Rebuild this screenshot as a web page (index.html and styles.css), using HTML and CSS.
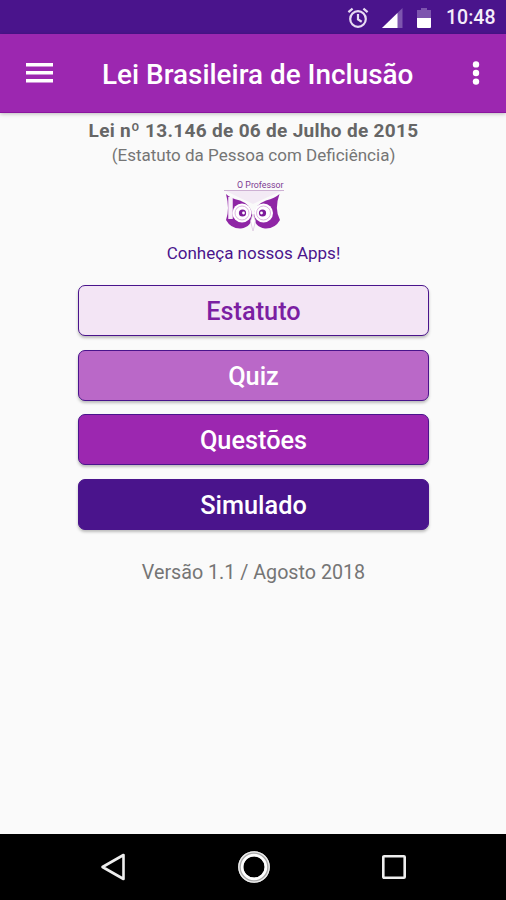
FILE: index.html
```html
<!DOCTYPE html>
<html lang="pt-BR">
<head>
<meta charset="utf-8">
<title>Lei Brasileira de Inclusão</title>
<link rel="stylesheet" href="styles.css">
</head>
<body>
<div class="status">
  <svg class="alarm" width="22" height="22" viewBox="0 0 22 22" fill="none" stroke="#e8dcf3" stroke-width="2.2"><circle cx="11" cy="12" r="7.8"/><path d="M11 7v5.4l3.7 2.3M1.4 5.2 5.6 1.6M20.6 5.2 16.4 1.6"/></svg>
  <svg class="signal" width="21" height="20" viewBox="0 0 21 20"><path d="M0 20 20.5 0v20z" fill="#7d55ae"/><path d="M0 20 15.5 5v15z" fill="#fff"/></svg>
  <svg class="battery" width="14" height="20" viewBox="0 0 14 20"><path d="M4 0h6v2h4v8H0V2h4z" fill="#7d55ae"/><path d="M0 10h14v9q0 1-1 1H1q-1 0-1-1z" fill="#fff"/></svg>
  <span class="clock">10:48</span>
</div>
<header class="appbar">
  <svg class="menu" width="27" height="20" viewBox="0 0 27 20" fill="#fff"><path d="M0 0h27v3.5H0zM0 8h27v3.5H0zM0 16h27v3.5H0z"/></svg>
  <h1 class="title">Lei Brasileira de Inclusão</h1>
  <svg class="more" width="8" height="24" viewBox="0 0 8 24" fill="#fff"><circle cx="4" cy="3.4" r="3.2"/><circle cx="4" cy="12" r="3.2"/><circle cx="4" cy="20.6" r="3.2"/></svg>
</header>
<main class="content">
  <p class="law">Lei nº 13.146 de 06 de Julho de 2015</p>
  <p class="sub">(Estatuto da Pessoa com Deficiência)</p>
  <div class="logo">
    <span class="brand">O Professor</span>
    <svg width="60" height="44" viewBox="0 0 60 44">
      <path d="M1 1.500H59L44 8 29 15 14 8z" fill="#f3eaf5"/>
      <path d="M0 1.500H60" stroke="#cdb0d3" stroke-width="1"/>
      <path d="M2 5Q6 9 16 11.500Q28 16 28 26Q28 38 17 39.500Q7 40 2 31Q6 20 2 5z" fill="#8f25a5"/>
      <path d="M55.500 5Q51 9 42 11.500Q30 16 30 26Q30 38 41 39.500Q51 40 56 31Q50 20 55.500 5z" fill="#8f25a5"/>
      <path d="M6.500 8v22" stroke="#f8effa" stroke-width="4.500"/>
      <g fill="#fff"><circle cx="18" cy="24" r="9.500"/><circle cx="39.500" cy="24" r="9.500"/></g>
      <g fill="none" stroke="#dcb6e1" stroke-width="1"><circle cx="18" cy="24" r="7"/><circle cx="39.500" cy="24" r="7"/></g>
      <g fill="#7d1a9b"><circle cx="18.500" cy="24" r="3.600"/><circle cx="38.500" cy="24" r="3.600"/></g>
      <g fill="#fff"><circle cx="19.500" cy="24" r="1.400"/><circle cx="37.500" cy="24" r="1.400"/></g>
      <path d="M29 25 31.500 32 29 42 26.500 32z" fill="#fff" stroke="#d5c0da" stroke-width=".7"/>
    </svg>
  </div>
  <p class="apps">Conheça nossos Apps!</p>
  <nav class="buttons">
    <button class="btn light">Estatuto</button>
    <button class="btn mid">Quiz</button>
    <button class="btn strong">Questões</button>
    <button class="btn dark">Simulado</button>
  </nav>
  <p class="version">Versão 1.1 / Agosto 2018</p>
</main>
<footer class="navbar">
  <svg width="26" height="30" viewBox="0 0 26 30" fill="none" stroke="#eee" stroke-width="2.6" stroke-linejoin="round"><path d="M2.5 15 23.5 3v24z"/></svg>
  <svg width="34" height="34" viewBox="0 0 34 34" fill="none"><circle cx="17" cy="17" r="13.2" stroke="#aaa" stroke-width="5.2"/><circle cx="17" cy="17" r="15.2" stroke="#eee" stroke-width="1.3"/><circle cx="17" cy="17" r="11.9" stroke="#fff" stroke-width="2.6"/></svg>
  <svg width="26" height="26" viewBox="0 0 26 26" fill="none" stroke="#eee" stroke-width="2.6"><rect x="2.3" y="2.3" width="21.4" height="21.4" rx=".8"/></svg>
</footer>
</body>
</html>
```
FILE: styles.css
```css
* { box-sizing: border-box; }
body {
  margin: 0;
  height: 900px;
  display: flex;
  flex-direction: column;
  overflow: hidden;
  background: #fafafa;
  font-family: Roboto, "Liberation Sans", sans-serif;
}
h1, p { margin: 0; white-space: nowrap; }
.status {
  height: 34px;
  flex: none;
  display: flex;
  align-items: center;
  justify-content: flex-end;
  padding: 1px 11px 0 0;
  background: #4a148c;
  color: #f4edfa;
}
.signal { margin-left: 13px; }
.battery { margin-left: 14px; }
.clock {
  width: 49px;
  margin-left: 15px;
  padding-top: 1px;
  font-size: 19.5px;
  font-weight: 500;
  line-height: 24px;
}
.appbar {
  position: relative;
  height: 79px;
  flex: none;
  display: flex;
  align-items: center;
  padding: 0 26px;
  background: #9c27b0;
  border-bottom: 1px solid #8b159f;
  box-shadow: 0 1px 4px rgba(0, 0, 0, .25);
  color: #fff;
}
.title {
  flex: 1;
  padding-left: 49px;
  padding-top: 3px;
  font-size: 27.9px;
  font-weight: 500;
  line-height: 32px;
}
.content {
  flex: 1;
  display: flex;
  flex-direction: column;
  align-items: center;
  padding-left: 1px;
  color: #757575;
}
.law {
  margin-top: 5px;
  font-size: 19px;
  font-weight: 700;
  line-height: 26px;
  letter-spacing: .31px;
  color: #666;
}
.sub { font-size: 17px; line-height: 22px; }
.logo {
  width: 60px;
  height: 54px;
  margin-top: 14px;
  display: flex;
  flex-direction: column;
}
.brand {
  align-self: flex-end;
  height: 9px;
  font-size: 8.8px;
  line-height: 10px;
  white-space: nowrap;
  color: #7e3a93;
}
.logo svg { flex: none; }
.apps {
  margin-top: 8px;
  font-size: 17px;
  line-height: 22px;
  color: #4a148c;
}
.buttons {
  width: 351px;
  margin-top: 21px;
  display: flex;
  flex-direction: column;
  gap: 13.6px;
}
.btn {
  height: 51px;
  padding: 3px 0 0;
  border: 1px solid #4a148c;
  border-radius: 7px;
  box-shadow: 0 2px 3px rgba(0, 0, 0, .25);
  font: 500 25.3px/30px Roboto, "Liberation Sans", sans-serif;
  color: #fff;
}
.light { background: #f3e5f5; color: #7b1fa2; }
.mid { background: #ba68c8; }
.strong { background: #9c27b0; }
.dark { background: #4a148c; }
.version {
  margin-top: 30px;
  font-size: 19.7px;
  line-height: 26px;
}
.navbar {
  height: 66px;
  flex: none;
  display: flex;
  align-items: center;
  justify-content: space-between;
  padding: 0 99px 0 100px;
  background: #000;
}
```
